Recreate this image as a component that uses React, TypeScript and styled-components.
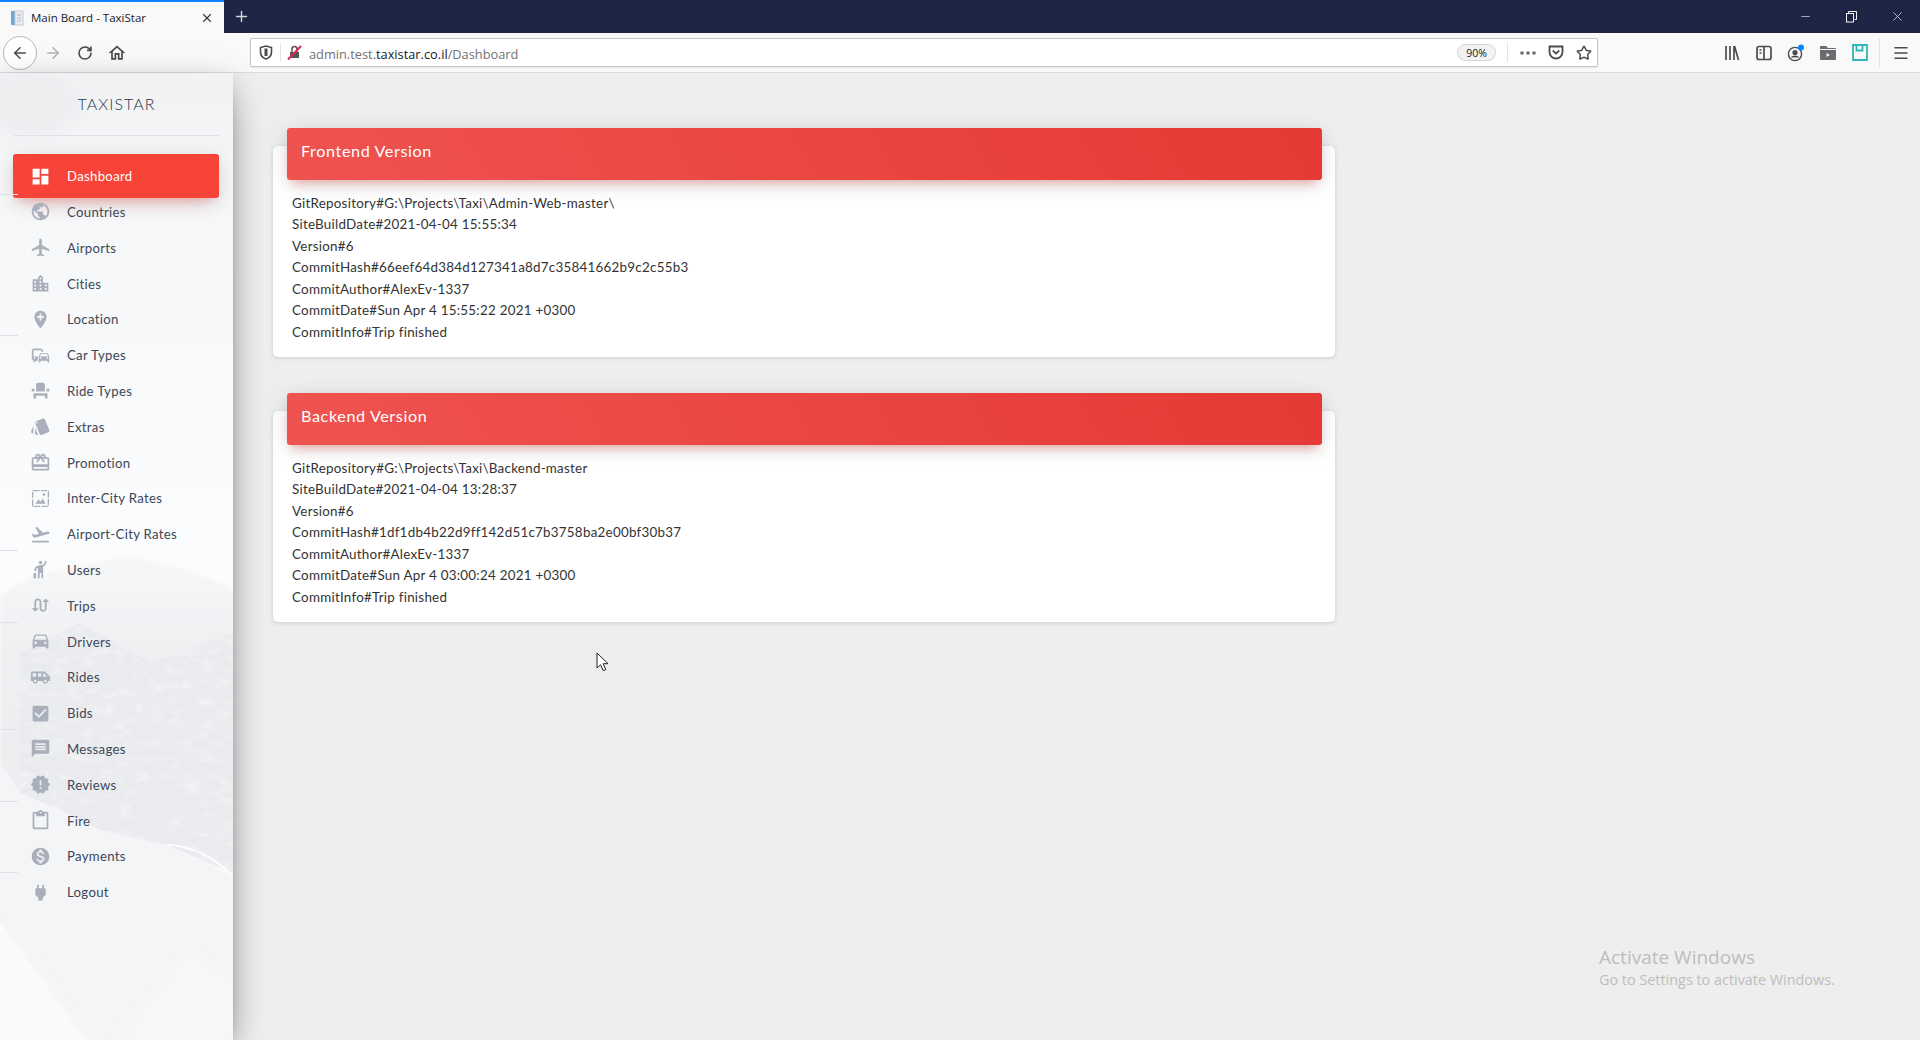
import React from 'react';
import styled, { createGlobalStyle } from 'styled-components';
import { ArrowLeft, ArrowRight, RotateCw, Star, Plus, X, Minus, Menu } from 'lucide-react';
import {
    MdDashboard,
    MdPublic,
    MdLocalAirport,
    MdLocationCity,
    MdAddLocation,
    MdCommute,
    MdEventSeat,
    MdStyle,
    MdRedeem,
    MdFlightTakeoff,
    MdHail,
    MdSwapCalls,
    MdDriveEta,
    MdAirportShuttle,
    MdCheckBox,
    MdMessage,
    MdNewReleases,
    MdContentPaste,
    MdMonetizationOn,
    MdPower,
    MdOutlineHome,
} from 'react-icons/md';

const GlobalStyle = createGlobalStyle`
    html, body {
        margin: 0;
        padding: 0;
        height: 100%;
        overflow: hidden;
        background: #eeeeee;
    }
    * {
        box-sizing: border-box;
    }
`;

const Page = styled.div`
    position: relative;
    width: 100%;
    height: 100vh;
    display: flex;
    flex-direction: column;
    font-family: Lato, 'Noto Sans', sans-serif;
`;

const TabBar = styled.div`
    height: 33px;
    flex: none;
    display: flex;
    background: #1f2544;
    color: #ffffff;
`;

const Tab = styled.div`
    width: 224px;
    display: flex;
    align-items: center;
    padding: 0 10px;
    background: #f9f9fa;
    border-top: 2px solid #0a84ff;
    color: #18181a;
    font: 11.5px 'Open Sans', sans-serif;
    svg {
        flex: none;
    }
`;

const TabTitle = styled.span`
    flex: 1;
    margin-left: 7px;
    white-space: nowrap;
`;

const NewTab = styled.div`
    width: 34px;
    display: flex;
    align-items: center;
    justify-content: center;
    color: #d4d6dd;
`;

const WindowButtons = styled.div`
    margin-left: auto;
    display: flex;
    align-items: center;
`;

const WindowButton = styled.div`
    width: 46px;
    display: flex;
    justify-content: center;
    color: #f4f5f8;
`;

const NavBar = styled.div`
    height: 40px;
    flex: none;
    display: flex;
    align-items: center;
    background: #f9f9fa;
    border-bottom: 1px solid #dcdcde;
    color: #4a4a4f;
`;

const NavButtons = styled.div`
    width: 250px;
    flex: none;
    display: flex;
    align-items: center;
    padding-left: 3px;
`;

const BackButton = styled.div`
    width: 34px;
    height: 34px;
    display: flex;
    align-items: center;
    justify-content: center;
    border: 1px solid #b8b8bb;
    border-radius: 50%;
    background: #ffffff;
`;

const NavIcon = styled.div<{ $muted?: boolean; $width?: number }>`
    width: ${p => p.$width || 32}px;
    display: flex;
    justify-content: center;
    color: ${p => (p.$muted ? '#b1b1b3' : '#4a4a4f')};
`;

const UrlBar = styled.div`
    width: 1348px;
    height: 29px;
    flex: none;
    display: flex;
    align-items: center;
    background: #ffffff;
    border: 1px solid #c4c4c6;
    border-radius: 2px;
    box-shadow: 0 1px 2px rgba(0, 0, 0, 0.08);
`;

const UrlLeft = styled.div`
    width: 30px;
    height: 19px;
    flex: none;
    display: flex;
    align-items: center;
    justify-content: center;
    border-right: 1px solid #e3e3e5;
`;

const UrlText = styled.div`
    flex: 1;
    margin-left: 6px;
    display: flex;
    align-items: center;
    color: #737373;
    font: 12.8px 'Open Sans', sans-serif;
    svg {
        margin-right: 7px;
    }
    span {
        position: relative;
        top: 1px;
    }
    b {
        font-weight: 400;
        color: #18181a;
    }
`;

const Zoom = styled.div`
    width: 39px;
    height: 17px;
    display: flex;
    align-items: center;
    justify-content: center;
    border: 1px solid #d5d5d7;
    border-radius: 9px;
    background: #f2f2f3;
    color: #18181a;
    font: 10.5px 'Open Sans', sans-serif;
`;

const UrlActions = styled.div`
    height: 19px;
    margin-left: 11px;
    padding-left: 6px;
    display: flex;
    align-items: center;
    border-left: 1px solid #e3e3e5;
`;

const ToolIcons = styled.div`
    flex: 1;
    height: 100%;
    padding-left: 118px;
    display: flex;
    align-items: center;
`;

const ToolSeparator = styled.div`
    width: 1px;
    height: 30px;
    margin: 0 4px 0 3px;
    background: #e3e3e5;
`;

const Body = styled.div`
    flex: 1;
    min-height: 0;
    display: flex;
`;

const Sidebar = styled.aside`
    position: relative;
    width: 233px;
    flex: none;
    z-index: 2;
    background: #f6f7f9;
    box-shadow: 0 16px 38px -12px rgba(0, 0, 0, 0.56), 0 4px 25px 0 rgba(0, 0, 0, 0.12), 0 8px 10px -5px rgba(0, 0, 0, 0.2);
`;

const SidebarBackdrop = styled.svg`
    position: absolute;
    left: 0;
    top: 0;
    width: 100%;
    height: 100%;
`;

const Logo = styled.div`
    position: relative;
    height: 63px;
    margin: 0 14px;
    display: flex;
    align-items: center;
    justify-content: center;
    padding-bottom: 2px;
    border-bottom: 1px solid #dfe1e5;
    color: #2c3644;
    font-size: 16px;
    font-weight: 300;
    letter-spacing: 1.05px;
`;

const NavList = styled.nav`
    position: relative;
    padding-top: 22.3px;
`;

const NavRow = styled.div<{ $active?: boolean; $rule?: number }>`
    position: relative;
    height: 35.8px;
    display: flex;
    align-items: center;
    padding-left: 30px;
    color: ${p => (p.$active ? '#ffffff' : '#3c4858')};
    font-size: 13.2px;
    letter-spacing: 0.3px;
    white-space: nowrap;

    &::before {
        content: '';
        display: ${p => (p.$active ? 'block' : 'none')};
        position: absolute;
        left: 13px;
        right: 14px;
        top: -4px;
        bottom: -4px;
        border-radius: 3px;
        background: #f84438;
        box-shadow: 0 12px 20px -10px rgba(244, 67, 54, 0.28), 0 4px 20px 0 rgba(0, 0, 0, 0.12), 0 7px 8px -5px rgba(244, 67, 54, 0.2);
    }
    &::after {
        content: '';
        display: ${p => (p.$rule === undefined ? 'none' : 'block')};
        position: absolute;
        left: 0;
        width: 18px;
        top: ${p => p.$rule || 0}px;
        height: 1px;
        background: #dfe1e5;
    }
    svg {
        position: relative;
        flex: none;
        width: 21px;
        height: 21px;
        color: ${p => (p.$active ? '#ffffff' : '#a9afbb')};
    }
`;

const NavLabel = styled.span`
    position: relative;
    margin-left: 16px;
`;

const Main = styled.main`
    flex: 1;
    padding: 73px 0 0 40px;
    background: #eeeeee;
`;

const Card = styled.section`
    width: 1062px;
    height: 211px;
    margin-bottom: 54px;
    padding: 0 14px;
    border-radius: 5px;
    background: #ffffff;
    box-shadow: 0 1px 4px 0 rgba(0, 0, 0, 0.14);
`;

const CardHeader = styled.header`
    position: relative;
    top: -18px;
    width: 1035px;
    height: 52px;
    display: flex;
    align-items: center;
    padding: 0 0 7px 14px;
    border-radius: 3px;
    background: linear-gradient(60deg, #ef5350, #e53935);
    box-shadow: 0 4px 20px 0 rgba(0, 0, 0, 0.14), 0 7px 10px -5px rgba(244, 67, 54, 0.4);
    color: #ffffff;
    font-size: 16.2px;
    letter-spacing: 0.6px;
`;

const CardBody = styled.div`
    margin-top: -5.5px;
    padding-left: 5px;
    color: #333333;
    font-size: 13.4px;
    letter-spacing: 0.25px;
    line-height: 21.5px;
`;

const Cursor = styled.svg`
    position: absolute;
    left: 596px;
    top: 652px;
`;

const ActivateNote = styled.div`
    position: absolute;
    left: 1599px;
    top: 943px;
    color: #bdbdbd;
    font-family: 'Open Sans', sans-serif;
    font-size: 14.4px;
    line-height: 18px;
    white-space: nowrap;
`;

const ActivateTitle = styled.div`
    font-size: 19px;
    line-height: 28px;
`;

const InterCityIcon = () => (
    <svg viewBox="0 0 24 24" fill="currentColor">
        <path d="M3 3h18v18H3z" fill="none" stroke="currentColor" strokeWidth="1.5" strokeDasharray="8 1.5 7 1.5" />
        <path d="M6 18l3.8-5 2.4 2.8 2.2-3.8 3.6 6z" />
        <circle cx="16" cy="7.5" r="1.5" />
    </svg>
);

const menuItems: { label: string; Icon: React.ComponentType; rule?: number }[] = [
    { label: 'Dashboard', Icon: MdDashboard, rule: 36 },
    { label: 'Countries', Icon: MdPublic },
    { label: 'Airports', Icon: MdLocalAirport },
    { label: 'Cities', Icon: MdLocationCity },
    { label: 'Location', Icon: MdAddLocation, rule: 34 },
    { label: 'Car Types', Icon: MdCommute },
    { label: 'Ride Types', Icon: MdEventSeat },
    { label: 'Extras', Icon: MdStyle },
    { label: 'Promotion', Icon: MdRedeem },
    { label: 'Inter-City Rates', Icon: InterCityIcon },
    { label: 'Airport-City Rates', Icon: MdFlightTakeoff, rule: 34 },
    { label: 'Users', Icon: MdHail },
    { label: 'Trips', Icon: MdSwapCalls, rule: 34 },
    { label: 'Drivers', Icon: MdDriveEta },
    { label: 'Rides', Icon: MdAirportShuttle },
    { label: 'Bids', Icon: MdCheckBox, rule: 34 },
    { label: 'Messages', Icon: MdMessage },
    { label: 'Reviews', Icon: MdNewReleases, rule: 34 },
    { label: 'Fire', Icon: MdContentPaste },
    { label: 'Payments', Icon: MdMonetizationOn, rule: 34 },
    { label: 'Logout', Icon: MdPower },
];

const versions = [
    {
        title: 'Frontend Version',
        lines: [
            'GitRepository#G:\\Projects\\Taxi\\Admin-Web-master\\',
            'SiteBuildDate#2021-04-04 15:55:34',
            'Version#6',
            'CommitHash#66eef64d384d127341a8d7c35841662b9c2c55b3',
            'CommitAuthor#AlexEv-1337',
            'CommitDate#Sun Apr 4 15:55:22 2021 +0300',
            'CommitInfo#Trip finished',
        ],
    },
    {
        title: 'Backend Version',
        lines: [
            'GitRepository#G:\\Projects\\Taxi\\Backend-master',
            'SiteBuildDate#2021-04-04 13:28:37',
            'Version#6',
            'CommitHash#1df1db4b22d9ff142d51c7b3758ba2e00bf30b37',
            'CommitAuthor#AlexEv-1337',
            'CommitDate#Sun Apr 4 03:00:24 2021 +0300',
            'CommitInfo#Trip finished',
        ],
    },
];

const Mountains = () => (
    <SidebarBackdrop viewBox="0 0 233 967" preserveAspectRatio="none">
        <defs>
            <linearGradient id="sky" x1="0" y1="0" x2="0" y2="1">
                <stop offset="0" stopColor="#f1f2f4" />
                <stop offset="0.14" stopColor="#f6f7f9" />
                <stop offset="0.5" stopColor="#fbfcfd" />
                <stop offset="1" stopColor="#fbfbfc" />
            </linearGradient>
            <linearGradient id="ridge" x1="0" y1="0" x2="0" y2="1">
                <stop offset="0" stopColor="#f6f7f8" />
                <stop offset="0.3" stopColor="#eff0f2" />
                <stop offset="1" stopColor="#e9ebee" />
            </linearGradient>
            <filter id="rock" x="0" y="0" width="100%" height="100%">
                <feTurbulence type="fractalNoise" baseFrequency="0.06 0.12" numOctaves="3" seed="9" />
                <feColorMatrix values="0 0 0 0 1  0 0 0 0 1  0 0 0 0 1  1.2 0 0 0 -0.58" />
                <feComposite in2="SourceGraphic" operator="in" result="snow" />
                <feMerge>
                    <feMergeNode in="SourceGraphic" />
                    <feMergeNode in="snow" />
                </feMerge>
            </filter>
            <filter id="soft">
                <feGaussianBlur stdDeviation="8" />
            </filter>
            <filter id="edge">
                <feGaussianBlur stdDeviation="1.5" />
            </filter>
            <filter id="wide">
                <feGaussianBlur stdDeviation="5" />
            </filter>
        </defs>
        <rect width="233" height="967" fill="url(#sky)" />
        <ellipse cx="30" cy="30" rx="50" ry="34" fill="#eceef0" filter="url(#soft)" />
        <path
            d="M0 522 L30 505 L62 496 L96 490 L128 482 L160 490 L190 498 L233 516 L233 800 L167 772 L100 757 L60 737 L20 720 L0 692 Z"
            fill="url(#ridge)"
            filter="url(#edge)"
        />
        <path
            d="M20 580 L80 550 L150 590 L233 560 L233 800 L167 772 L100 757 L60 737 L20 720 Z"
            fill="#e9ebee"
            filter="url(#rock)"
            opacity="0.85"
        />
        <path d="M167 772 C190 772 215 785 233 803" stroke="#fcfcfd" strokeWidth="2" fill="none" />
        <path d="M0 692 L20 720 L60 737 L100 757 L167 772 L233 803 L233 967 L85 967 L0 850 Z" fill="#f4f5f7" />
        <path d="M190 882 L233 912 L233 967 L120 967 Z" fill="#f7f8f9" filter="url(#wide)" />
        <path d="M0 850 L85 967 L0 967 Z" fill="#fafafb" filter="url(#wide)" />
    </SidebarBackdrop>
);

const App = () => {
    return (
        <Page>
            <GlobalStyle />
            <TabBar>
                <Tab>
                    <svg width="14" height="16" viewBox="0 0 14 16">
                        <rect x="1" y="1" width="4" height="14" fill="#6aa9dc" />
                        <rect x="5" y="1" width="8" height="14" fill="#e8ecf0" stroke="#c8ccd2" />
                        <path d="M7 5h4M7 8h4M7 11h4" stroke="#b4bac2" />
                    </svg>
                    <TabTitle>Main Board - TaxiStar</TabTitle>
                    <X size={14} color="#3a3a3d" />
                </Tab>
                <NewTab>
                    <Plus size={17} />
                </NewTab>
                <WindowButtons>
                    <WindowButton>
                        <Minus size={13} strokeWidth={1.2} />
                    </WindowButton>
                    <WindowButton>
                        <svg width="12" height="12" viewBox="0 0 12 12" fill="none" stroke="currentColor">
                            <path d="M3.5 2.5V.5h8v8h-2" />
                            <rect x="1.5" y="2.5" width="7" height="8.5" />
                        </svg>
                    </WindowButton>
                    <WindowButton>
                        <X size={15} strokeWidth={1.1} />
                    </WindowButton>
                </WindowButtons>
            </TabBar>
            <NavBar>
                <NavButtons>
                    <BackButton>
                        <ArrowLeft size={18} strokeWidth={2} />
                    </BackButton>
                    <NavIcon $muted>
                        <ArrowRight size={18} strokeWidth={2} />
                    </NavIcon>
                    <NavIcon>
                        <RotateCw size={16} strokeWidth={2.4} />
                    </NavIcon>
                    <NavIcon>
                        <MdOutlineHome size={20} />
                    </NavIcon>
                </NavButtons>
                <UrlBar>
                    <UrlLeft>
                        <svg width="14" height="15" viewBox="0 0 14 15" fill="none" stroke="#4a4a4f" strokeWidth="1.6">
                            <path d="M7 1 L12.5 2.5 V7 C12.5 10.5 10 13 7 14 C4 13 1.5 10.5 1.5 7 V2.5 Z" />
                            <path d="M7 3.5 V11" strokeWidth="3" />
                        </svg>
                    </UrlLeft>
                    <UrlText>
                        <svg width="15" height="15" viewBox="0 0 15 15">
                            <path d="M3 7h9v6H3z" fill="#55555a" />
                            <path d="M5 7V4a2.5 2.5 0 015 0v3" fill="none" stroke="#55555a" strokeWidth="1.5" />
                            <path d="M1 14.5L14 1" stroke="#e22850" strokeWidth="2" />
                        </svg>
                        <span>
                            admin.test.<b>taxistar.co.il</b>/Dashboard
                        </span>
                    </UrlText>
                    <Zoom>90%</Zoom>
                    <UrlActions>
                        <NavIcon $width={27}>
                            <svg width="16" height="4" viewBox="0 0 16 4" fill="#6a6a6f">
                                <circle cx="2" cy="2" r="1.8" />
                                <circle cx="8" cy="2" r="1.8" />
                                <circle cx="14" cy="2" r="1.8" />
                            </svg>
                        </NavIcon>
                        <NavIcon $width={29}>
                            <svg width="16" height="15" viewBox="0 0 16 15" fill="none" stroke="#4a4a4f" strokeWidth="1.8">
                                <path d="M1.5 1.5h13V7a6.5 6.5 0 01-13 0z" />
                                <path d="M4.8 5.5L8 8.6l3.2-3.1" />
                            </svg>
                        </NavIcon>
                        <NavIcon $width={27}>
                            <Star size={16} strokeWidth={2.2} />
                        </NavIcon>
                    </UrlActions>
                </UrlBar>
                <ToolIcons>
                    <NavIcon>
                        <svg width="16" height="16" viewBox="0 0 16 16" stroke="#4a4a4f" strokeWidth="1.7" fill="none">
                            <path d="M2 1v14M6 1v14M10 1v14M10.5 1l4 14" />
                        </svg>
                    </NavIcon>
                    <NavIcon>
                        <svg width="16" height="16" viewBox="0 0 16 16" stroke="#4a4a4f" strokeWidth="1.7" fill="none">
                            <rect x="1" y="1.5" width="14" height="13" rx="2" />
                            <path d="M8 1.5v13M3.5 5h2M3.5 8h2" />
                        </svg>
                    </NavIcon>
                    <NavIcon>
                        <svg width="18" height="18" viewBox="0 0 18 18">
                            <circle cx="8" cy="10" r="6.6" fill="none" stroke="#4a4a4f" strokeWidth="1.4" />
                            <circle cx="8" cy="8.5" r="2.6" fill="#4a4a4f" />
                            <path d="M3.6 13.5a5 4 0 018.8 0z" fill="#4a4a4f" />
                            <circle cx="14" cy="3.5" r="3" fill="#0a84ff" />
                        </svg>
                    </NavIcon>
                    <NavIcon>
                        <svg width="16" height="15" viewBox="0 0 16 15">
                            <path d="M0 2a1 1 0 011-1h5l2 2h7a1 1 0 011 1H0z M0 5h16v9a1 1 0 01-1 1H1a1 1 0 01-1-1z" fill="#6a6a6f" />
                            <path d="M6.5 8v4l3.5-2z" fill="#f9f9fa" />
                        </svg>
                    </NavIcon>
                    <NavIcon>
                        <svg width="16" height="17" viewBox="0 0 16 17" fill="none" stroke="#30b6b8" strokeWidth="1.8">
                            <path d="M1 1h14v15H1z" />
                            <path d="M4.5 1v5.5h6V1" />
                        </svg>
                    </NavIcon>
                    <ToolSeparator />
                    <NavIcon $width={34}>
                        <Menu size={18} strokeWidth={2} />
                    </NavIcon>
                </ToolIcons>
            </NavBar>
            <Body>
                <Sidebar>
                    <Mountains />
                    <Logo>TAXISTAR</Logo>
                    <NavList>
                        {menuItems.map(({ label, Icon, rule }, i) => (
                            <NavRow key={label} $active={i === 0} $rule={rule}>
                                <Icon />
                                <NavLabel>{label}</NavLabel>
                            </NavRow>
                        ))}
                    </NavList>
                </Sidebar>
                <Main>
                    {versions.map(v => (
                        <Card key={v.title}>
                            <CardHeader>{v.title}</CardHeader>
                            <CardBody>
                                {v.lines.map(line => (
                                    <div key={line}>{line}</div>
                                ))}
                            </CardBody>
                        </Card>
                    ))}
                </Main>
            </Body>
            <Cursor width="14" height="20" viewBox="0 0 14 20">
                <path d="M1 1v15l3.6-3.3 2.6 6 2.6-1.1-2.6-5.9H12z" fill="#ffffff" stroke="#222222" />
            </Cursor>
            <ActivateNote>
                <ActivateTitle>Activate Windows</ActivateTitle>
                Go to Settings to activate Windows.
            </ActivateNote>
        </Page>
    );
};

export default App;
